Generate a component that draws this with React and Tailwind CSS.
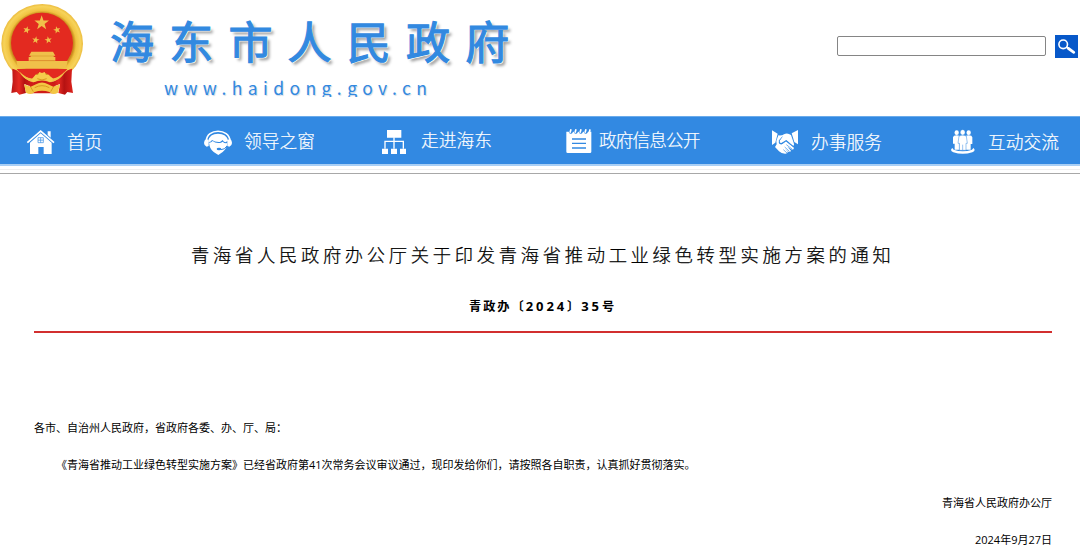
import React from "react";

function Emblem() {
  const star = "0,-10 2.4,-3.2 9.5,-3.1 3.8,1.2 5.9,8.1 0,4 -5.9,8.1 -3.8,1.2 -9.5,-3.1 -2.4,-3.2";
  return (
    <svg className="h-[100px] w-[84px] shrink-0" viewBox="0 0 252 300">
      <defs>
        <radialGradient id="gold" cx="50%" cy="50%" r="52%">
          <stop offset="74%" stopColor="#c98a1c" />
          <stop offset="80%" stopColor="#f0c341" />
          <stop offset="90%" stopColor="#f7d35a" />
          <stop offset="100%" stopColor="#e5ae2e" />
        </radialGradient>
        <linearGradient id="drape" x1="0" x2="1">
          <stop offset="0" stopColor="#b81414" />
          <stop offset="0.35" stopColor="#e52a22" />
          <stop offset="0.6" stopColor="#b51212" />
          <stop offset="1" stopColor="#dc221c" />
        </linearGradient>
      </defs>
      <ellipse cx="126.500" cy="131" rx="122.500" ry="119" fill="url(#gold)" />
      <ellipse cx="126" cy="129" rx="93" ry="91" fill="#e32a20" />
      <g fill="#f0c04a">
        <polygon points={star} transform="translate(125 69) scale(2.300)" />
        <polygon points={star} transform="translate(80 90) scale(1.150) rotate(15)" />
        <polygon points={star} transform="translate(171 90) scale(1.150) rotate(-15)" />
        <polygon points={star} transform="translate(107 120) scale(1.150) rotate(10)" />
        <polygon points={star} transform="translate(145 120) scale(1.150) rotate(-10)" />
        <path d="M94 155H159L166 167H161V171H166V182H86V171H92V167H87Z" />
        <path d="M49 183H203L198 206H54Z" />
      </g>
      <path d="M92 168H161M90 182H164" stroke="#cf8d22" strokeWidth="1.500" />
      <path d="M50 207H202Q180 236 160 236L145 224L127 212L107 224L96 236Q68 234 50 207Z" fill="#e32a20" />
      <path d="M37 206Q52 208 64 224Q76 241 100 246L88 258L73 252L78 279L58 284L50 276L34 279L38 245Z" fill="url(#drape)" />
      <path d="M216 206Q201 208 189 224Q177 241 153 246L165 258L180 252L175 279L195 284L202 276L219 279L214 245Z" fill="url(#drape)" />
      <path d="M88 252L126 232L166 252L160 280H92Z" fill="#cf1c18" />
      <path d="M58 214Q76 236 104 238Q126 226 148 238Q176 236 195 214Q184 240 150 247Q126 236 101 247Q70 240 58 214Z" fill="#f0c445" />
      <path d="M101 235L106 224L114 225L118 216L126 219L134 216L138 225L147 224L151 235L160 240L150 247Q138 238 126 238Q114 238 101 247L92 240Z" fill="#f5cd4c" />
      <path d="M72 253L92 260L108 253Q126 242 144 253L160 260L180 253L174 278Q158 287 148 276Q126 268 104 276Q94 287 78 278Z" fill="#f3c644" />
      <path d="M104 263Q126 251 148 263M112 236Q126 244 140 236M92 261L100 275M160 261L152 275" fill="none" stroke="#d99a20" strokeWidth="3" />
    </svg>
  );
}

function HomeIcon() {
  return (
    <svg className="h-[27px] w-[30px] shrink-0" viewBox="78 69 90 81" fill="white">
      <path d="M143 79H152V98L143 90Z" />
      <path d="M82 113L122 78L162 113" fill="none" stroke="white" strokeWidth="5" />
      <path d="M90 113L122 85L155 113V147H131V126H115V147H90Z" />
      <path d="M114 98H130V113H114ZM122 98V113M114 105.500H130" stroke="#3289e2" strokeWidth="2" fill="none" />
    </svg>
  );
}

function HeadsetIcon() {
  return (
    <svg className="h-[27px] w-[30px] shrink-0" viewBox="609 69 90 81" fill="white">
      <path d="M619 108C620 69 688 69 690 108" fill="none" stroke="white" strokeWidth="5" />
      <path d="M619 103Q612 105 612 114Q612 122 620 125L626 123V104ZM690 103Q696 105 696 114Q696 122 688 125L682 123V104Z" />
      <path d="M625 107Q629 86 654 86Q680 86 684 107L676 112Q670 110 668 105L660 111Q645 112 636 105Q634 111 625 112Z" />
      <path d="M627 113Q634 113 638 108Q647 116 663 113L668 110Q674 116 682 114Q680 132 668 141L655 150L641 141Q629 132 627 113Z" />
      <path d="M681 123Q674 134 663 134" fill="none" stroke="#3289e2" strokeWidth="3" />
      <ellipse cx="657" cy="132" rx="7" ry="4" fill="#3289e2" />
    </svg>
  );
}

function OrgIcon() {
  return (
    <svg className="h-[27px] w-[26px] shrink-0" viewBox="63 69 78 81" fill="white">
      <path d="M81 75H124V98H81ZM66 131H84V147H66ZM93 131H111V147H93ZM120 131H138V147H120Z" />
      <path d="M102 97V131M75 131V109H130V131" fill="none" stroke="white" strokeWidth="4" />
    </svg>
  );
}

function NotepadIcon() {
  return (
    <svg className="h-[27px] w-[28px] shrink-0" viewBox="615 69 84 81" fill="white">
      <path d="M619 80H626Q628 88 634 86Q638 84 639 80H641Q643 88 649 86Q653 84 654 80H656Q658 88 664 86Q668 84 669 80H671Q673 88 679 86Q683 84 684 80H694V140Q694 144 690 144H623Q619 144 619 140Z" />
      <path d="M630 83L633 73M645 83L648 73M660 83L663 73M675 83L678 73M688 83L690 73" stroke="white" strokeWidth="5" />
      <path d="M636 102H678M636 115H678M636 129H678" stroke="#3289e2" strokeWidth="4" />
    </svg>
  );
}

function HandshakeIcon() {
  return (
    <svg className="h-[27px] w-[28px] shrink-0" viewBox="153 69 84 81" fill="white">
      <path d="M156 76L173 86L166 113L156 120Z" />
      <path d="M234 75L215 85L223 111L234 118Z" />
      <path d="M175 91Q185 93 192 88Q202 82 213 90L221 113Q224 119 220 123L199 105L184 114Q176 114 180 106L188 94Z" />
      <path d="M175 91L190 93L178 106Q174 115 181 118Q187 119 198 109L222 128Q222 134 216 134L202 125L213 137Q210 143 205 140L195 131L204 141Q200 147 195 146Q184 146 177 139L165 126L170 118L169 108Z" />
      <path d="M187 95L178 106Q175 116 184 117L198 108L221 126M199 119L217 133M194 126L209 140M190 134L201 144" fill="none" stroke="#3289e2" strokeWidth="2" />
    </svg>
  );
}

function PeopleIcon() {
  return (
    <svg className="h-[27px] w-[26px] shrink-0" viewBox="690 69 78 81" fill="white">
      <ellipse cx="710" cy="83" rx="6.500" ry="7" />
      <ellipse cx="746" cy="83" rx="6.500" ry="7" />
      <path d="M702 92Q710 89 718 92V134H704V116H699V97ZM738 92Q746 89 754 92L757 97V117H752V134H738Z" />
      <path d="M717 93Q728 87 739 93L742 115H738V136H718V115H714Z" stroke="#3289e2" strokeWidth="1.500" />
      <ellipse cx="728" cy="82" rx="7" ry="8" stroke="#3289e2" strokeWidth="1" />
      <path d="M728 119V135" stroke="#3289e2" strokeWidth="1.500" />
      <path d="M697 129Q688 136 700 142Q728 151 757 142Q769 136 760 129L756 134Q728 143 701 134Z" />
    </svg>
  );
}

const navItems = [
  { label: "首页", Icon: HomeIcon, box: "w-[177px]", text: "ml-[11px] mt-[1px] tracking-[0.1px]" },
  { label: "领导之窗", Icon: HeadsetIcon, box: "w-[178px]", text: "ml-[11px] tracking-[0.1px]" },
  { label: "走进海东", Icon: OrgIcon, box: "w-[184px]", text: "ml-[14px] -mt-px tracking-[0.1px]" },
  { label: "政府信息公开", Icon: NotepadIcon, box: "w-[206px]", text: "ml-[6px] -mt-px tracking-[-0.95px]" },
  { label: "办事服务", Icon: HandshakeIcon, box: "w-[179px]", text: "ml-[12px] mt-[1px] tracking-[0.1px]" },
  { label: "互动交流", Icon: PeopleIcon, box: "w-[130px]", text: "ml-[12px] mt-[1px] tracking-[0.1px]" },
];

function Header() {
  return (
    <header className="flex h-[116px] items-start">
      <Emblem />
      <div className="ml-[26px] flex flex-col pt-[10px]">
        <h1 className="h-[66px] whitespace-nowrap text-[44px] leading-[64px] font-normal tracking-[15.2px] text-[#3289e0] [-webkit-text-stroke:1.2px_#3289e0] [text-shadow:0_0_2px_#fff,1px_1px_0_#fff,3px_3px_3px_#9c9c9c]">
          海东市人民政府
        </h1>
        <div className="ml-[54px] h-[21px] overflow-hidden whitespace-nowrap font-['Noto_Sans_CJK_SC'] text-[17.5px] leading-[23px] tracking-[5.4px] text-[#3289e0] [text-shadow:1px_1px_1px_#ccd8e6]">
          www.haidong.gov.cn
        </div>
      </div>
      <form className="ml-auto flex items-start gap-[9px] pt-[35px] pr-[2px]" onSubmit={(e) => e.preventDefault()}>
        <input className="mt-px h-5 w-[209px] rounded-[2px] border border-[#858585] bg-white" />
        <button className="flex h-[23px] w-[23px] items-center justify-center bg-[#0758c9]">
          <svg className="h-[23px] w-[23px]" viewBox="0 0 23 23" fill="none" stroke="white">
            <circle cx="8.200" cy="9.300" r="4.300" strokeWidth="1.600" />
            <path d="M11.500 12L13.500 13.500" strokeWidth="2" />
            <path d="M13.500 13.500L18.800 17.300" strokeWidth="2.800" strokeLinecap="round" />
          </svg>
        </button>
      </form>
    </header>
  );
}

export default function App() {
  return (
    <div className="h-[558px] w-[1080px] overflow-hidden bg-white font-['Open_Sans','Noto_Sans_CJK_SC',sans-serif] text-black">
      <Header />
      <nav className="flex h-[50px] items-start border-t border-b-2 border-t-[#6aabeb] border-b-[#a9cff5] bg-[#3289e2] pt-[11px] pl-[26px]">
        {navItems.map(({ label, Icon, box, text }) => (
          <a key={label} className={`flex shrink-0 items-start ${box}`}>
            <Icon />
            <span className={`whitespace-nowrap text-[17.7px] leading-[26px] font-light text-white [-webkit-text-stroke:0.2px_white] ${text}`}>{label}</span>
          </a>
        ))}
      </nav>
      <div className="mt-[3px] h-[5px] border-t border-b border-t-[#efefef] border-b-[#a8a8a8]" />
      <main className="pr-[28px] pl-[34px] text-[11px]">
        <h2 className="mt-[65px] whitespace-nowrap pl-[157px] text-[18.3px] leading-[32px] font-light tracking-[3.7px] [-webkit-text-stroke:0.25px_black]">
          青海省人民政府办公厅关于印发青海省推动工业绿色转型实施方案的通知
        </h2>
        <div className="mt-[25px] h-[37px] whitespace-nowrap border-b-2 border-[#d22f2f] pl-[435px] text-[12.2px] leading-[20px] font-bold tracking-[2px]">
          青政办〔<span className="text-[13px] tracking-[2.9px]">2024</span>〕<span className="text-[13px] tracking-[2.9px]">35</span>号
        </div>
        <p className="mt-[85px] leading-[20px]">各市、自治州人民政府，省政府各委、办、厅、局：</p>
        <p className="mt-[17px] whitespace-nowrap pl-[22px] leading-[20px]">
          《青海省推动工业绿色转型实施方案》已经省政府第41次常务会议审议通过，现印发给你们，请按照各自职责，认真抓好贯彻落实。
        </p>
        <p className="mt-[18px] text-right leading-[20px]">青海省人民政府办公厅</p>
        <p className="mt-[17px] text-right leading-[20px]">2024年9月27日</p>
      </main>
    </div>
  );
}
